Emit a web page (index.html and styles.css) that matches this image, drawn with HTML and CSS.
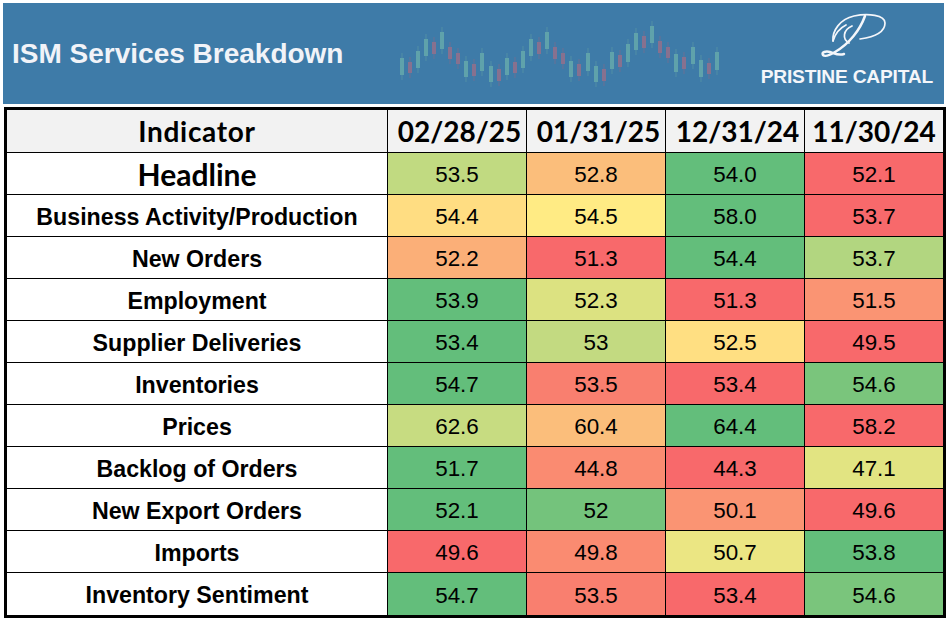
FILE: index.html
```html
<!DOCTYPE html>
<html lang="en">
<head>
<meta charset="utf-8">
<title>ISM Services Breakdown</title>
<link rel="stylesheet" href="styles.css">
</head>
<body>
<div class="page">
  <header class="banner">
    <h1 class="title">ISM Services Breakdown</h1>
    <svg class="candles" viewBox="396 3 330 101" width="330" height="101" aria-hidden="true">
      <g class="wick-up">
        <path d="M402 53V80M418 46V73M426 34V61M442 27V54M466 56V82M482 48V76M491 61V87M507 53V80M523 46V73M531 34V61M547 27V54M571 56V82M588 48V76M596 61V87M612 47V74M628 39V67M636 28V55M652 21V48M676 49V77M693 42V69M701 55V82M717 47V75"/>
      </g>
      <g class="wick-down">
        <path d="M410 57V78M434 37V59M450 42V64M458 48V69M474 59V81M499 64V86M515 57V78M539 37V59M555 42V64M563 48V69M579 59V81M604 64V86M620 50V72M644 31V53M660 36V58M668 42V63M684 52V74M709 58V79"/>
      </g>
      <g class="up">
        <rect x="400" y="58" width="4" height="17"/>
        <rect x="416" y="51" width="4" height="17"/>
        <rect x="424" y="39" width="4" height="17"/>
        <rect x="440" y="32" width="4" height="17"/>
        <rect x="464" y="61" width="4" height="16"/>
        <rect x="480" y="53" width="4" height="18"/>
        <rect x="489" y="66" width="4" height="16"/>
        <rect x="505" y="58" width="4" height="17"/>
        <rect x="521" y="51" width="4" height="17"/>
        <rect x="529" y="39" width="4" height="17"/>
        <rect x="545" y="32" width="4" height="17"/>
        <rect x="569" y="61" width="4" height="16"/>
        <rect x="586" y="53" width="4" height="18"/>
        <rect x="594" y="66" width="4" height="16"/>
        <rect x="610" y="52" width="4" height="17"/>
        <rect x="626" y="44" width="4" height="18"/>
        <rect x="634" y="33" width="4" height="17"/>
        <rect x="650" y="26" width="4" height="17"/>
        <rect x="674" y="54" width="4" height="18"/>
        <rect x="691" y="47" width="4" height="17"/>
        <rect x="699" y="60" width="4" height="17"/>
        <rect x="715" y="52" width="4" height="18"/>
      </g>
      <g class="down">
        <rect x="408" y="62" width="4" height="11"/>
        <rect x="432" y="42" width="4" height="12"/>
        <rect x="448" y="47" width="4" height="12"/>
        <rect x="456" y="53" width="4" height="11"/>
        <rect x="472" y="64" width="4" height="12"/>
        <rect x="497" y="69" width="4" height="12"/>
        <rect x="513" y="62" width="4" height="11"/>
        <rect x="537" y="42" width="4" height="12"/>
        <rect x="553" y="47" width="4" height="12"/>
        <rect x="561" y="53" width="4" height="11"/>
        <rect x="577" y="64" width="4" height="12"/>
        <rect x="602" y="69" width="4" height="12"/>
        <rect x="618" y="55" width="4" height="12"/>
        <rect x="642" y="36" width="4" height="12"/>
        <rect x="658" y="41" width="4" height="12"/>
        <rect x="666" y="47" width="4" height="11"/>
        <rect x="682" y="57" width="4" height="12"/>
        <rect x="707" y="63" width="4" height="11"/>
      </g>
    </svg>
    <div class="brand">
      <svg class="brand-mark" viewBox="0 0 80 56" width="80" height="56" aria-hidden="true">
        <path class="thin" d="M21 33C20 23 28 11 42 8C56 5 73 7 73 15C73 24 62 29 48 31"/>
        <path class="thin" d="M21 33C23 26 28 20 34 17"/>
        <path class="thick" d="M53 8C48 22 37 36 23 44C18 47 13 49 11 47C9 44 14 43 18 44C22 45 26 48 32 46"/>
        <path class="thin" d="M37 35C30 31 31 22 40 18"/>
      </svg>
      <span class="brand-name">PRISTINE CAPITAL</span>
    </div>
  </header>

  <table class="grid">
    <colgroup>
      <col class="col-label">
      <col class="col-date">
      <col class="col-date">
      <col class="col-date">
      <col class="col-date-last">
    </colgroup>
    <thead>
      <tr class="head-row">
        <th class="head-label">Indicator</th>
        <th class="head-date">02/28/25</th>
        <th class="head-date">01/31/25</th>
        <th class="head-date">12/31/24</th>
        <th>11/30/24</th>
      </tr>
    </thead>
    <tbody>
      <tr>
        <td class="label label-headline">Headline</td>
        <td class="c-lgreen">53.5</td><td class="c-orange">52.8</td><td class="c-green">54.0</td><td class="c-red">52.1</td>
      </tr>
      <tr>
        <td class="label">Business Activity/Production</td>
        <td class="c-amber">54.4</td><td class="c-yellow">54.5</td><td class="c-green">58.0</td><td class="c-red">53.7</td>
      </tr>
      <tr>
        <td class="label">New Orders</td>
        <td class="c-peach">52.2</td><td class="c-red">51.3</td><td class="c-green">54.4</td><td class="c-lime">53.7</td>
      </tr>
      <tr>
        <td class="label">Employment</td>
        <td class="c-green">53.9</td><td class="c-khaki">52.3</td><td class="c-red">51.3</td><td class="c-salmon">51.5</td>
      </tr>
      <tr>
        <td class="label">Supplier Deliveries</td>
        <td class="c-green">53.4</td><td class="c-olive">53</td><td class="c-gold">52.5</td><td class="c-red">49.5</td>
      </tr>
      <tr>
        <td class="label">Inventories</td>
        <td class="c-green">54.7</td><td class="c-coral">53.5</td><td class="c-red">53.4</td><td class="c-mint">54.6</td>
      </tr>
      <tr>
        <td class="label">Prices</td>
        <td class="c-olive2">62.6</td><td class="c-orange">60.4</td><td class="c-green">64.4</td><td class="c-red">58.2</td>
      </tr>
      <tr>
        <td class="label">Backlog of Orders</td>
        <td class="c-green">51.7</td><td class="c-salmon2">44.8</td><td class="c-red">44.3</td><td class="c-pale">47.1</td>
      </tr>
      <tr>
        <td class="label">New Export Orders</td>
        <td class="c-green">52.1</td><td class="c-mint2">52</td><td class="c-salmon">50.1</td><td class="c-red">49.6</td>
      </tr>
      <tr>
        <td class="label">Imports</td>
        <td class="c-red">49.6</td><td class="c-salmon2">49.8</td><td class="c-sand">50.7</td><td class="c-green">53.8</td>
      </tr>
      <tr>
        <td class="label">Inventory Sentiment</td>
        <td class="c-green">54.7</td><td class="c-coral">53.5</td><td class="c-red">53.4</td><td class="c-mint">54.6</td>
      </tr>
    </tbody>
  </table>
</div>
</body>
</html>
```

FILE: styles.css
```css
* { box-sizing: border-box; }

html, body {
  margin: 0;
  padding: 0;
  background: #ffffff;
}

.page {
  width: 946px;
  height: 620px;
  padding-top: 3px;
  overflow: hidden;
}

.banner {
  display: flex;
  align-items: center;
  margin-left: 3px;
  width: 941px;
  height: 101px;
  background: #3e7ba8;
}

.title {
  margin: 0;
  padding-left: 9px;
  font-family: "Liberation Sans", Arial, sans-serif;
  font-weight: 700;
  font-size: 28px;
  color: #f1f3f8;
  white-space: nowrap;
}

.candles {
  display: block;
  flex: none;
  margin-left: 53px;
  align-self: flex-start;
}

.candles .up { fill: #5fa2ab; }
.candles .down { fill: #87718f; }
.candles .wick-up path { stroke: #5a98a5; stroke-width: 1; fill: none; opacity: 0.7; }
.candles .wick-down path { stroke: #7b6e90; stroke-width: 1; fill: none; opacity: 0.7; }

.brand {
  margin-left: auto;
  align-self: flex-start;
  padding-top: 5px;
  padding-right: 11px;
  display: flex;
  flex-direction: column;
  align-items: center;
}

.brand-mark {
  display: block;
  margin-left: 10px;
}

.brand-mark path {
  fill: none;
  stroke: #f4f6fa;
  stroke-linecap: round;
}

.brand-mark .thin { stroke-width: 1.7; }
.brand-mark .thick { stroke-width: 2.5; }

.brand-name {
  display: block;
  margin-top: 2px;
  font-family: "Liberation Sans", Arial, sans-serif;
  font-weight: 700;
  font-size: 19.2px;
  line-height: 22px;
  color: #f4f6fa;
  letter-spacing: -0.2px;
  white-space: nowrap;
}

.grid {
  margin-top: 3px;
  margin-left: 4px;
  width: 942px;
  table-layout: fixed;
  border-collapse: separate;
  border-spacing: 0;
  border: 3px solid #000;
}

.col-label { width: 381px; }
.col-date { width: 139px; }
.col-date-last { width: 138px; }

.grid th,
.grid td {
  padding: 0;
  text-align: center;
  vertical-align: middle;
  border-right: 1px solid #000;
  border-bottom: 1px solid #000;
  white-space: nowrap;
  color: #000;
}

.grid th:last-child,
.grid td:last-child { border-right: none; }

.grid tbody tr:last-child td { border-bottom: none; }

.head-row { height: 43px; }

.grid th {
  background: #f2f2f2;
  font-family: Lato, "Liberation Sans", sans-serif;
  font-weight: 700;
  font-size: 28px;
}

.grid th.head-label { letter-spacing: 0.7px; }
.grid th.head-date { padding-left: 5px; }

.grid tbody tr { height: 42px; }

.grid td {
  padding-top: 3px;
  font-family: "Liberation Sans", Arial, sans-serif;
  font-size: 22.4px;
}

.grid td.label {
  font-weight: 700;
  font-size: 23.2px;
  background: #fff;
}

.grid td.label-headline {
  font-family: Lato, "Liberation Sans", sans-serif;
  font-size: 30px;
  padding-top: 1px;
}

.c-green { background: #63be7b; }
.c-red { background: #f8696b; }
.c-lgreen { background: #c1da81; }
.c-orange { background: #fbbe7b; }
.c-amber { background: #ffdd82; }
.c-yellow { background: #ffeb84; }
.c-peach { background: #fbaf78; }
.c-lime { background: #b2d680; }
.c-khaki { background: #dce281; }
.c-salmon { background: #fa9473; }
.c-olive { background: #c3da81; }
.c-olive2 { background: #c7dc81; }
.c-gold { background: #ffdf82; }
.c-coral { background: #f97f6f; }
.c-mint { background: #7ac57c; }
.c-mint2 { background: #74c37c; }
.c-salmon2 { background: #fa8b71; }
.c-pale { background: #e2e482; }
.c-sand { background: #ebe683; }
```
